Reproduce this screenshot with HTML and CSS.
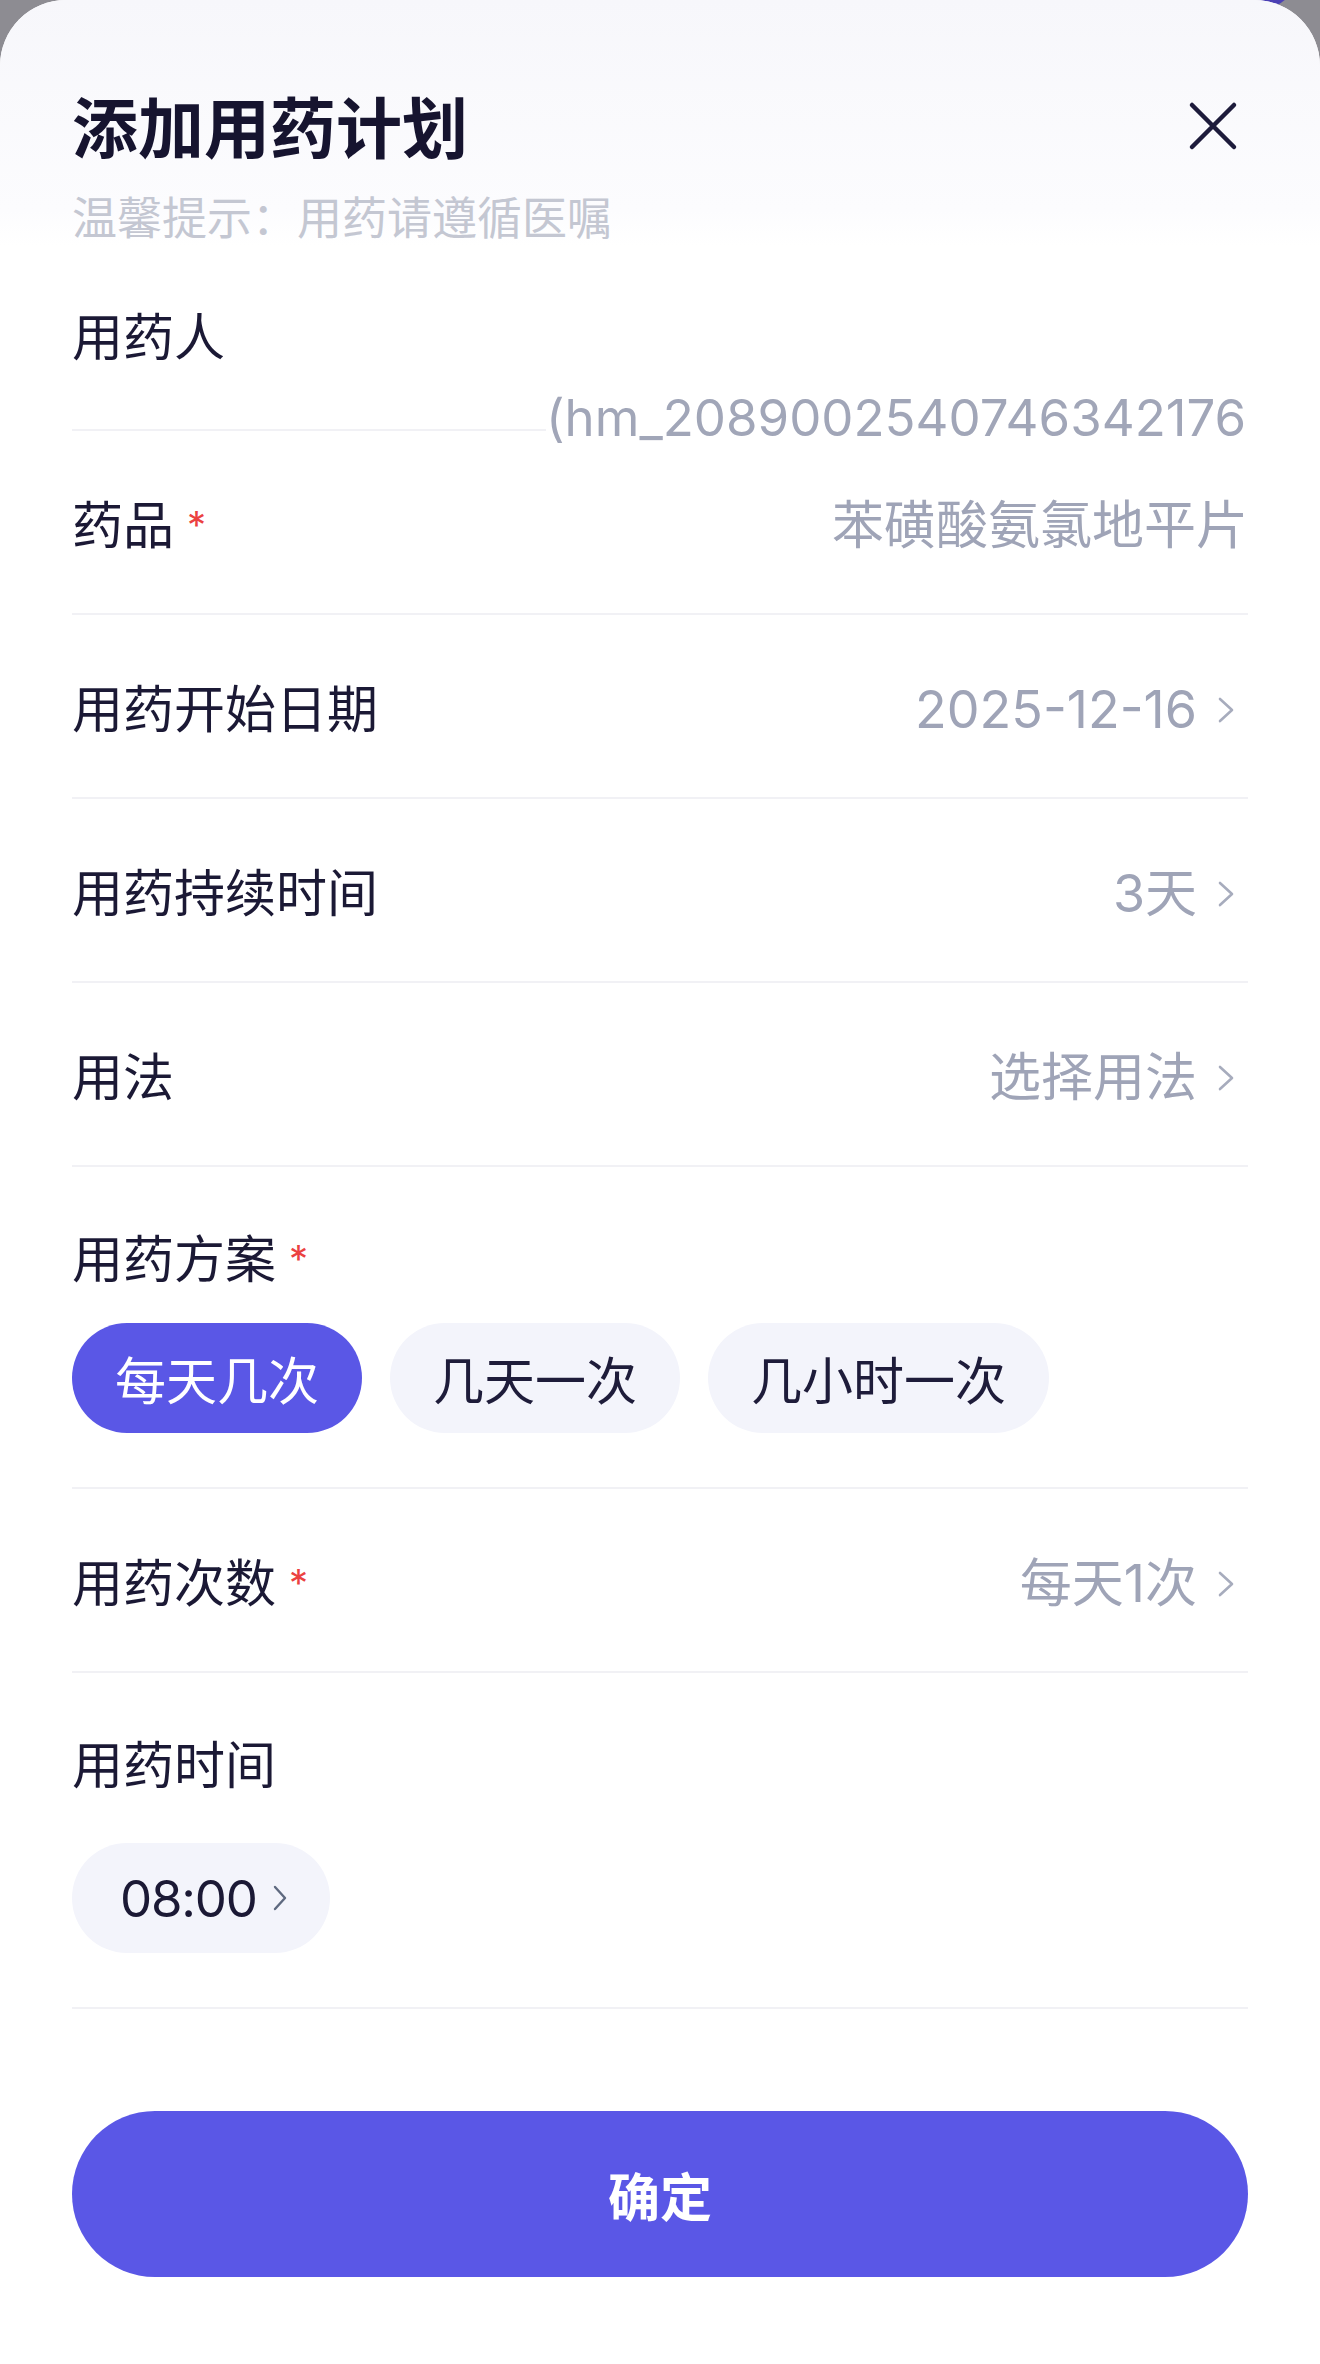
FILE: index.html
```html
<!DOCTYPE html>
<html>
<head>
    <meta charset="utf-8" />
    <title>添加用药计划</title>
    <link rel="stylesheet" href="styles.css">
</head>
<body>
    <div class="sheet">
        <div class="sheet-head">
            <div class="head-row">
                <h1 class="title">添加用药计划</h1>
                <button class="close">
                    <svg viewBox="0 0 52 52" width="52" height="52"><path d="M5 5L47 47M47 5L5 47" fill="none" stroke="currentColor" stroke-width="4.5" stroke-linecap="round"/></svg>
                </button>
            </div>
            <p class="tip">温馨提示：用药请遵循医嘱</p>
        </div>

        <div class="form">
            <div class="row row-user">
                <span class="label">用药人</span>
                <span class="user-value">(hm_20890025407463421765)</span>
            </div>
            <div class="row">
                <span class="label">药品<i class="req">*</i></span>
                <span class="value">苯磺酸氨氯地平片</span>
            </div>
            <div class="row">
                <span class="label">用药开始日期</span>
                <span class="value">2025-12-16<svg class="arrow" viewBox="0 0 18 26"><path d="M3 2l12 11-12 11" fill="none" stroke="currentColor" stroke-width="2.6" stroke-linecap="round" stroke-linejoin="round"/></svg></span>
            </div>
            <div class="row">
                <span class="label">用药持续时间</span>
                <span class="value">3天<svg class="arrow" viewBox="0 0 18 26"><path d="M3 2l12 11-12 11" fill="none" stroke="currentColor" stroke-width="2.6" stroke-linecap="round" stroke-linejoin="round"/></svg></span>
            </div>
            <div class="row">
                <span class="label">用法</span>
                <span class="value">选择用法<svg class="arrow" viewBox="0 0 18 26"><path d="M3 2l12 11-12 11" fill="none" stroke="currentColor" stroke-width="2.6" stroke-linecap="round" stroke-linejoin="round"/></svg></span>
            </div>
            <div class="row stack">
                <span class="label">用药方案<i class="req">*</i></span>
                <div class="opts">
                    <span class="opt on">每天几次</span>
                    <span class="opt">几天一次</span>
                    <span class="opt">几小时一次</span>
                </div>
            </div>
            <div class="row">
                <span class="label">用药次数<i class="req">*</i></span>
                <span class="value">每天1次<svg class="arrow" viewBox="0 0 18 26"><path d="M3 2l12 11-12 11" fill="none" stroke="currentColor" stroke-width="2.6" stroke-linecap="round" stroke-linejoin="round"/></svg></span>
            </div>
            <div class="row stack">
                <span class="label">用药时间</span>
                <div class="times">
                    <span class="time">08:00<svg class="arrow" viewBox="0 0 16 28"><path d="M3 3l10 11-10 11" fill="none" stroke="currentColor" stroke-width="2.4" stroke-linecap="round" stroke-linejoin="round"/></svg></span>
                </div>
            </div>
        </div>

        <button class="submit">确定</button>
    </div>
</body>
</html>
```

FILE: styles.css
```css
* {
    box-sizing: border-box;
}
body {
    margin: 0;
    background: radial-gradient(circle at 1262px -26px, #4b40b4 0 34px, transparent 35px), #8d8c92;
    font-family: Inter, "Noto Sans CJK SC", sans-serif;
}
.sheet {
    width: 1320px;
    min-height: 2364px;
    background: #fff;
    border-radius: 66px 66px 0 0;
    overflow: hidden;
}

/* head */
.sheet-head {
    height: 247px;
    padding: 89px 72px 0;
    background: linear-gradient(#f7f7fb, #fcfcfe 85%, #fff);
}
.head-row {
    display: flex;
    align-items: center;
    justify-content: space-between;
    height: 80px;
}
.title {
    margin: 0;
    font-size: 66px;
    line-height: 80px;
    font-weight: 700;
    color: #16142f;
}
.close {
    display: block;
    width: 52px;
    height: 52px;
    padding: 0;
    margin: 0 9px 6px 0;
    border: none;
    background: none;
    color: #1d1b3b;
}
.close svg {
    display: block;
}
.tip {
    margin: 21px 0 0;
    font-size: 45px;
    line-height: 58px;
    color: #c4c7d2;
}

/* form rows */
.form {
    padding: 0 72px;
}
.row {
    display: flex;
    align-items: center;
    justify-content: space-between;
    height: 184px;
    padding-top: 8px;
    border-bottom: 2px solid #f1f1f5;
}
.label {
    display: flex;
    align-items: center;
    font-size: 51px;
    line-height: 70px;
    color: #1b1935;
}
.req {
    font-style: normal;
    font-size: 38px;
    line-height: 38px;
    color: #eb4141;
    margin: 0 0 2px 13px;
}
.value {
    display: flex;
    align-items: center;
    font-size: 52px;
    line-height: 70px;
    color: #9fa4b7;
}
.arrow {
    width: 18px;
    height: 26px;
    margin: 0 13px 0 20px;
    color: #a7acbd;
}
.row-user {
    padding-top: 0;
}
.row-user .user-value {
    position: relative;
    align-self: flex-end;
    width: 702px;
    margin-bottom: -19px;
    overflow: hidden;
    white-space: nowrap;
    font-size: 51px;
    line-height: 60px;
    color: #a1a6b8;
    background: #fff;
}

/* stacked rows */
.stack {
    flex-direction: column;
    align-items: flex-start;
    justify-content: flex-start;
    height: auto;
    padding: 58px 0 54px;
}
.opts {
    display: flex;
    gap: 28px;
    margin-top: 28px;
}
.opt {
    display: flex;
    align-items: center;
    height: 110px;
    padding: 0 43px;
    border-radius: 55px;
    background: #f3f4fb;
    font-size: 51px;
    color: #1e1c3a;
}
.opt.on {
    background: #5a57e6;
    color: #fff;
}
.times {
    display: flex;
    margin-top: 42px;
}
.time {
    display: flex;
    align-items: center;
    height: 110px;
    padding: 0 42px 0 48px;
    border-radius: 55px;
    background: #f3f4fb;
    font-size: 51px;
    letter-spacing: -1.2px;
    color: #1b1935;
}
.time .arrow {
    width: 16px;
    height: 28px;
    margin: 0 0 0 15px;
    color: #5e697f;
}

/* submit */
.submit {
    display: block;
    width: 1176px;
    height: 166px;
    margin: 102px 72px 0;
    border: none;
    border-radius: 83px;
    background: #5a57e6;
    color: #fff;
    font-family: Inter, "Noto Sans CJK SC", sans-serif;
    font-size: 52px;
    font-weight: 600;
}
```
